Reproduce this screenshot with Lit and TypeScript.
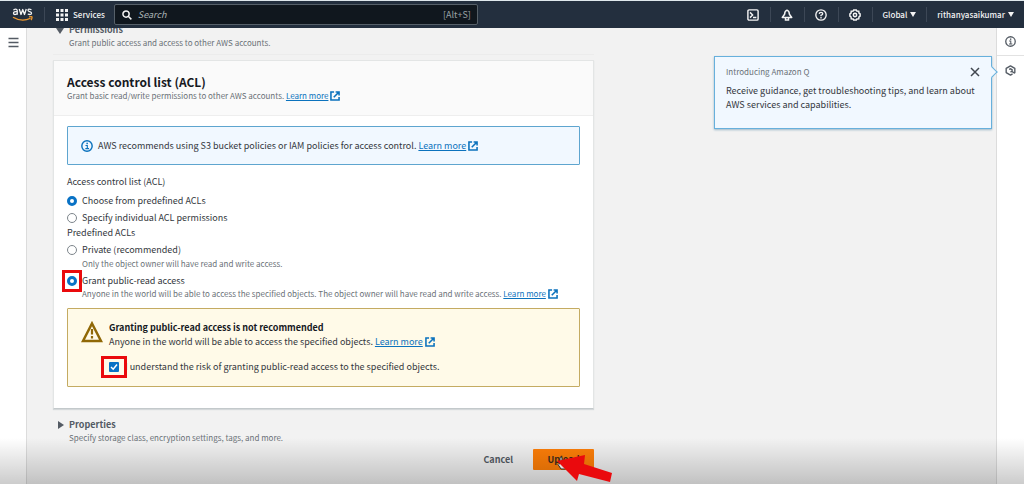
import { LitElement, html, css, svg } from "lit";
import { customElement, property, state } from "lit/decorators.js";

const externalIcon = html`<svg class="ext" viewBox="0 0 16 16" aria-hidden="true">
  <path d="M6.500 1.500H1.500V14.500H14.500V9.500M9 1.500H14.500V7M14 2L6 10" fill="none" stroke="currentColor" stroke-width="2.500" />
</svg>`;

const infoShape = svg`<circle cx="8" cy="8" r="6.900" fill="none" stroke="currentColor" stroke-width="1.900" />
  <path d="M6 7.300H8.400V11.500M5.800 11.500H10.700" fill="none" stroke="currentColor" stroke-width="1.500" /><rect x="7.200" y="3.600" width="2" height="2" fill="currentColor" />`;

@customElement("top-bar")
class TopBar extends LitElement {
  static styles = css`
    :host { display: block; }
    .bar {
      display: flex; align-items: center; height: 28px; box-sizing: border-box;
      background: #232f3e; border-top: 1px solid #dfe8ec; color: #f4f4f4;
      font: 8px/14px "Noto Sans CJK JP", "Noto Sans", sans-serif;
    }
    .logo { display: flex; padding: 0 11px 0 12px; }
    .logo svg { width: 21px; height: 15px; }
    .rule { width: 1px; height: 15px; background: #3c4756; }
    button { font: inherit; color: inherit; background: none; border: 0; padding: 0; display: flex; align-items: center; }
    .services { padding: 0 9px 0 11px; gap: 5px; font-weight: 500; }
    .services svg { width: 12px; height: 12px; fill: currentColor; }
    .search {
      display: flex; align-items: center; flex: 0 1 364px; height: 21px; box-sizing: border-box;
      border: 1px solid #566069; border-radius: 2px; background: #10171e; padding: 0 6px 0 7px; gap: 6px; color: #9aa3a6; font-size: 9px;
    }
    .search svg { width: 10px; height: 10px; color: #f4f4f4; flex: none; }
    input { flex: 1; min-width: 0; border: 0; outline: 0; background: none; padding: 0; font: italic 9px/14px "Noto Sans CJK JP", "Noto Sans", sans-serif; color: #fff; }
    input::placeholder { color: #a9b2b4; opacity: 1; }
    .tools { display: flex; align-items: center; margin-left: auto; font-weight: 500; }
    .icon { width: 33px; justify-content: center; }
    .icon svg { width: 12px; height: 12px; }
    .menu { gap: 3px; padding: 0 10px; }
    .menu::after { content: ""; border: 3px solid transparent; border-top: 5px solid currentColor; border-bottom: 0; }
  `;
  render() {
    return html`<header class="bar">
      <a class="logo" aria-label="aws"><svg viewBox="0 0 42 30">
        <g fill="none" stroke="#f4f4f4" stroke-width="2.600" stroke-linejoin="round">
          <path d="M3 6.500Q4 4.200 7 4.200Q10.500 4.200 10.500 8V15.500M10.500 9.500Q3 8.600 3 12.600Q3 15 6 15Q9 15 10.500 12.500" />
          <path d="M14.500 4L18 15L21.500 5L25 15L28.500 4" />
          <path d="M39 5.500Q32 2.700 32 6.600Q32 8.600 35.500 9.400Q39.500 10.300 39 12.800Q37.500 16.500 31.500 14" />
        </g>
        <g fill="none" stroke="#f29a2e" stroke-width="2.600">
          <path d="M2 20.500Q20 31 37 22.500" /><path d="M34 19.800Q41 18.500 40 20.500Q40 23.500 38 26" />
        </g></svg></a>
      <span class="rule"></span>
      <button class="services"><svg viewBox="0 0 12 12" aria-hidden="true">
        ${[0, 4.5, 9].map((y) => [0, 4.5, 9].map((x) => svg`<rect x=${x} y=${y} width="3" height="3" />`))}
      </svg>Services</button>
      <label class="search"><svg viewBox="0 0 16 16" aria-hidden="true" fill="none" stroke="currentColor" stroke-width="2.400"><circle cx="6.500" cy="6.500" r="5" /><path d="M10 10L15 15" /></svg>
        <input type="text" placeholder="Search" aria-label="Search" /><span>[Alt+S]</span></label>
      <div class="tools">
        <button class="icon" aria-label="CloudShell"><svg viewBox="0 0 16 16" fill="none" stroke="currentColor" stroke-width="1.900"><rect x="1.200" y="1.200" width="13.600" height="13.600" rx="1.500" /><path d="M4 4.500L7.500 8L4 11.500M8 11.300H12.500" /></svg></button>
        <span class="rule"></span>
        <button class="icon" aria-label="Notifications"><svg viewBox="0 0 16 16" fill="none" stroke="currentColor" stroke-width="2"><path d="M8 1.500C5.500 2.500 4.800 4 4.800 7L1.700 11.300H14.300L11.200 7C11.200 4 10.500 2.500 8 1.500Z" stroke-linejoin="round" /><path d="M6 12V14.500H10V12" /></svg></button>
        <span class="rule"></span>
        <button class="icon" aria-label="Help"><svg viewBox="0 0 16 16" fill="none" stroke="currentColor" stroke-width="1.800"><circle cx="8" cy="8" r="6.900" /><path d="M5.700 6.500Q5.800 4.400 8 4.400Q10.300 4.400 10.300 6.300Q10.300 7.500 8 8.400V9.800M8 10.800V12.500" /></svg></button>
        <span class="rule"></span>
        <button class="icon" aria-label="Settings"><svg viewBox="0 0 16 16" fill="none" stroke="currentColor" stroke-width="2"><path d="M6.300 1.200H9.700L10.500 2.800L13 3L13.300 5.500L14.800 6.500V9.500L13.300 10.500L13 13L10.500 13.200L9.700 14.800H6.300L5.500 13.200L3 13L2.700 10.500L1.200 9.500V6.500L2.700 5.500L3 3L5.500 2.800Z" /><circle cx="8" cy="8" r="2.200" /></svg></button>
        <span class="rule"></span>
        <button class="menu">Global</button>
        <span class="rule"></span>
        <button class="menu">rithanyasaikumar</button>
      </div>
    </header>`;
  }
}

@customElement("app-root")
class AppRoot extends LitElement {
  @property({ type: String }) acl = "public";
  @state() private mode = "predefined";
  @state() private popover = true;

  static styles = css`
    :host {
      display: flex; flex-direction: column; height: 100vh; overflow: hidden; position: relative;
      background: #f2f2f2; color: #33373d; font: 9px/14px "Noto Sans CJK JP", "Noto Sans", sans-serif;
    }
    * { box-sizing: border-box; }
    top-bar { flex: none; position: relative; z-index: 1; }
    h2, h3, p, fieldset { margin: 0; padding: 0; border: 0; font: inherit; min-width: 0; }
    legend { padding: 0; }
    button { font: inherit; color: inherit; background: none; border: 0; padding: 0; }
    a { color: #0b72bd; text-decoration: underline; white-space: nowrap; }
    .ext { width: 10px; height: 10px; margin-left: 2px; vertical-align: -2px; }
    .small { font-size: 8px; line-height: 12px; color: #6a7177; }
    .body { display: flex; flex: 1; min-height: 0; }
    .rail { flex: none; width: 27px; background: #fff; display: flex; flex-direction: column; align-items: center; }
    .left { border-right: 1px solid #dcdcdc; padding-top: 9px; }
    .right { width: 28px; border-left: 1px solid #dcdcdc; }
    .rail button { display: flex; justify-content: center; width: 100%; color: #545b64; }
    .right button { height: 28px; align-items: center; }
    .right button:first-child { border-bottom: 1px solid #e2e2e2; }
    .rail svg { width: 11px; height: 11px; }
    main { flex: 1; min-width: 0; overflow: hidden; padding: 0 26px; }
    .column { max-width: 541px; margin-top: -5px; }
    .section { padding: 0 0 0 16px; }
    .section h2 { position: relative; font-weight: 700; color: #545b64; }
    .section h2::before { content: ""; position: absolute; left: -11px; top: 3px; border: 4px solid transparent; border-left: 6px solid #545b64; border-right: 0; }
    .section.open { border-bottom: 1px solid #ececec; padding-bottom: 5px; }
    .section.open h2::before { left: -13px; top: 5px; border: 4px solid transparent; border-top: 6px solid #545b64; border-bottom: 0; }
    .card { margin: 5px 0 9px; background: #fff; border: 1px solid #e3e5e5; border-bottom-color: #c3c9cb; box-shadow: 0 1px 1px #d4d8da; }
    .cardhead { background: #fafafa; border-bottom: 1px solid #eee; padding: 12px 13px 13px; }
    .cardhead h3 { font-size: 12px; line-height: 17px; font-weight: 700; color: #16191f; }
    .content { padding: 10px 13px 21px; }
    .info { display: flex; align-items: center; gap: 5px; height: 39px; padding: 0 13px; border: 1px solid #5ea5cf; background: #f1f8ff; border-radius: 1px; }
    .info > svg { width: 12px; height: 12px; color: #0b72bd; flex: none; }
    .group { display: flex; flex-direction: column; margin-top: 10px; }
    .group + .group { margin-top: 1px; }
    .choice { display: flex; align-items: center; gap: 5px; margin-top: 3px; position: relative; }
    .first { margin-top: 5px; }
    .choice input { appearance: none; width: 10px; height: 10px; margin: 0; flex: none; border: 1px solid #7d858b; border-radius: 50%; background: #fff; }
    .choice input:checked { border: 3px solid #0972c5; }
    .hint { padding-left: 15px; margin-top: 1px; }
    .hint + .choice { margin-top: 4px; }
    .choice + .flush { margin-top: 0; }
    .mark::before { content: ""; position: absolute; box-sizing: border-box; left: -5px; top: -4px; width: 20px; height: 22px; border: 3px solid #ea0a0d; }
    .warn { display: flex; gap: 6px; height: 79px; margin-top: 8px; padding: 12px 13px; border: 1px solid #c4ab62; background: #fffae8; border-radius: 1px; }
    .warn > svg { width: 22px; height: 22px; flex: none; color: #906806; }
    .warn h3 { font-weight: 700; color: #16191f; }
    .agree { margin-top: 11px; gap: 6px; }
    .agree input { border-radius: 1px; }
    .agree input:checked { border: 0; background: #0972c5; }
    .agree svg { position: absolute; left: 1px; top: 3px; width: 8px; height: 8px; pointer-events: none; }
    .agree::before { content: ""; position: absolute; box-sizing: border-box; left: -8px; top: -4px; width: 26px; height: 22px; border: 3px solid #ea0a0d; z-index: 1; }
    .actions { display: flex; justify-content: flex-end; align-items: center; gap: 20px; margin-top: 5px; font-weight: 700; color: #545b64; }
    .upload { width: 61px; height: 21px; background: #ff7f08; border-radius: 1px; color: #3b2a1c; position: relative; }
    .hand { position: absolute; left: 24px; top: 7px; width: 11px; height: 14px; }
    .pointer { position: absolute; left: 24px; top: 5px; width: 56px; height: 29px; overflow: visible; z-index: 3; }
    .popover { position: absolute; right: 32px; top: 56px; width: 278px; height: 73px; padding: 9px 11px; background: #f1f8ff; border: 1px solid #67b0dc; box-shadow: 0 1px 2px #9db7c8; z-index: 1; }
    .popover::after { content: ""; position: absolute; right: -5px; top: 11px; width: 7px; height: 7px; background: #f1f8ff; border: 1px solid #67b0dc; border-width: 1px 1px 0 0; transform: rotate(45deg); }
    .popover p { margin-top: 6px; }
    .close { position: absolute; right: 11px; top: 10px; display: flex; }
    .close svg { width: 10px; height: 10px; }
    .shade { position: absolute; left: 0; right: 0; bottom: 0; height: 46px; background: linear-gradient(#0000, #0003); pointer-events: none; }
  `;

  private radio(name: string, value: string, label: string, current: string, cls = "") {
    return html`<label class="choice ${cls}"><input type="radio" name=${name} value=${value} .checked=${current === value}
      @change=${() => (name === "mode" ? (this.mode = value) : (this.acl = value))} /><span>${label}</span></label>`;
  }

  render() {
    return html`
      <top-bar></top-bar>
      <div class="body">
        <nav class="rail left"><button aria-label="Open navigation"><svg viewBox="0 0 11 11" stroke="currentColor" stroke-width="1.500"><path d="M0.500 1.500H10.500M0.500 5.500H10.500M0.500 9.500H10.500" /></svg></button></nav>
        <main><div class="column">
          <section class="section open"><h2>Permissions</h2><p class="small">Grant public access and access to other AWS accounts.</p></section>
          <section class="card">
            <div class="cardhead"><h3>Access control list (ACL)</h3>
              <p class="small">Grant basic read/write permissions to other AWS accounts. <a href="#acl">Learn more${externalIcon}</a></p></div>
            <div class="content">
              <div class="info"><svg viewBox="0 0 16 16" aria-hidden="true">${infoShape}</svg>
                <span>AWS recommends using S3 bucket policies or IAM policies for access control. <a href="#policies">Learn more${externalIcon}</a></span></div>
              <fieldset class="group"><legend>Access control list (ACL)</legend>
                ${this.radio("mode", "predefined", "Choose from predefined ACLs", this.mode, "first")}
                ${this.radio("mode", "individual", "Specify individual ACL permissions", this.mode)}</fieldset>
              <fieldset class="group"><legend>Predefined ACLs</legend>
                ${this.radio("acl", "private", "Private (recommended)", this.acl)}
                <p class="small hint">Only the object owner will have read and write access.</p>
                ${this.radio("acl", "public", "Grant public-read access", this.acl, "mark")}
                <p class="small hint flush">Anyone in the world will be able to access the specified objects. The object owner will have read and write access. <a href="#public">Learn more${externalIcon}</a></p></fieldset>
              <div class="warn"><svg viewBox="0 0 22 22" aria-hidden="true"><path d="M11 2.500L20 20H2Z" fill="none" stroke="currentColor" stroke-width="2.500" /><path d="M11 8V13.500M11 15V17.500" stroke="currentColor" stroke-width="2.200" /></svg>
                <div><h3>Granting public-read access is not recommended</h3>
                  <p>Anyone in the world will be able to access the specified objects. <a href="#risk">Learn more${externalIcon}</a></p>
                  <label class="choice agree"><input type="checkbox" checked /><svg viewBox="0 0 8 8" fill="none" stroke="#fff" stroke-width="1.500"><path d="M1 4L3.200 6.200L7 1.500" /></svg><span>I understand the risk of granting public-read access to the specified objects.</span></label></div></div>
            </div>
          </section>
          <section class="section"><h2>Properties</h2><p class="small">Specify storage class, encryption settings, tags, and more.</p></section>
          <div class="actions"><button>Cancel</button><button class="upload">Upload
            <svg class="hand" viewBox="0 0 11 14" aria-hidden="true"><path d="M3 6V1.500Q4 0.300 5 1.500V5L9 6Q10 6.500 9.500 10L8.500 13H4L1 8.500Q1.500 7 3 8Z" fill="#fff" stroke="#333" stroke-width="1" /></svg>
            <svg class="pointer" viewBox="0 0 56 29" aria-hidden="true"><path d="M0 7L28 1L27 10L55 19L53 28L22 20L20 27Z" fill="#ea0a0d" /></svg></button></div>
        </div></main>
        <aside class="rail right"><button aria-label="Info"><svg viewBox="0 0 16 16">${infoShape}</svg></button>
          <button aria-label="Amazon Q" @click=${() => (this.popover = true)}><svg viewBox="0 0 16 16" fill="none" stroke="currentColor" stroke-width="2"><path d="M13.500 12L14.300 11V5L8 1.300L1.700 5V11L8 14.700L11 13" stroke-linejoin="round" /><path d="M6 6.500L8 5.500L10.300 6.800V9L8 10.300M9 8.500L14 12" /></svg></button></aside>
      </div>
      ${this.popover ? html`<div class="popover" role="dialog" aria-label="Introducing Amazon Q"><div class="small">Introducing Amazon Q</div>
        <button class="close" aria-label="Close" @click=${() => (this.popover = false)}><svg viewBox="0 0 10 10" stroke="#414750" stroke-width="1.500"><path d="M1 1L9 9M9 1L1 9" /></svg></button>
        <p>Receive guidance, get troubleshooting tips, and learn about AWS services and capabilities.</p></div>` : ""}
      <div class="shade"></div>`;
  }
}
